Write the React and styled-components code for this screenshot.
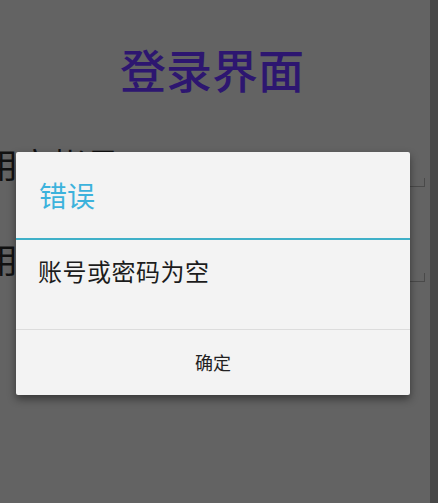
import styled, { createGlobalStyle } from "styled-components";

const GlobalStyle = createGlobalStyle`
  html, body {
    margin: 0;
    padding: 0;
    background: #636363;
  }
  body {
    font-family: "Noto Sans CJK SC", "Noto Sans", sans-serif;
  }
`;

const Screen = styled.div`
  position: relative;
  width: 438px;
  height: 503px;
  overflow: hidden;
  display: flex;
  background: #636363;
`;

const Content = styled.div`
  flex: 1;
  display: flex;
  flex-direction: column;
`;

const EdgeStrip = styled.div`
  width: 8px;
  background: #474747;
`;

const PageTitle = styled.h1`
  margin: 40px 0 0;
  padding-right: 6px;
  font-size: 46px;
  line-height: 56px;
  font-weight: 500;
  color: #2d1670;
  text-align: center;
`;

const FieldRow = styled.div`
  display: flex;
  align-items: flex-end;
  height: 48px;
  margin-top: ${(props) => props.$top}px;
`;

const Label = styled.span`
  align-self: flex-start;
  margin-left: -16px;
  font-size: 34px;
  line-height: 40px;
  color: #111;
  white-space: nowrap;
`;

const Underline = styled.div`
  flex: 1;
  margin: 0 5px 5px 8px;
  height: 8px;
  border: 1px solid #4a4a4a;
  border-top: none;
`;

const Overlay = styled.div`
  position: absolute;
  left: 16px;
  top: 152px;
  width: 394px;
  background: #f3f3f3;
  border-radius: 2px;
  box-shadow: 0 4px 8px rgba(0, 0, 0, 0.45);
  display: flex;
  flex-direction: column;
`;

const DialogTitle = styled.div`
  height: 86px;
  display: flex;
  align-items: center;
  padding-left: 23px;
  font-size: 28px;
  color: #3cb2dc;
`;

const Divider = styled.div`
  height: 2px;
  background: #3fb0c8;
`;

const Message = styled.div`
  height: 89px;
  box-sizing: border-box;
  padding: 16px 0 0 22px;
  font-size: 24px;
  line-height: 30px;
  letter-spacing: 0.5px;
  color: #1c1c1c;
`;

const Separator = styled.div`
  height: 1px;
  background: #dcdcdc;
`;

const OkButton = styled.button`
  height: 65px;
  border: none;
  background: transparent;
  font-family: inherit;
  font-size: 18px;
  color: #222;
  padding: 0;
  padding-bottom: 2px;
`;

export default function App() {
  return (
    <>
      <GlobalStyle />
      <Screen>
        <Content>
          <PageTitle>登录界面</PageTitle>
          <FieldRow $top={48}>
            <Label>用户帐号</Label>
            <Underline />
          </FieldRow>
          <FieldRow $top={47}>
            <Label>用户密码</Label>
            <Underline />
          </FieldRow>
        </Content>
        <EdgeStrip />
        <Overlay>
          <DialogTitle>错误</DialogTitle>
          <Divider />
          <Message>账号或密码为空</Message>
          <Separator />
          <OkButton>确定</OkButton>
        </Overlay>
      </Screen>
    </>
  );
}
